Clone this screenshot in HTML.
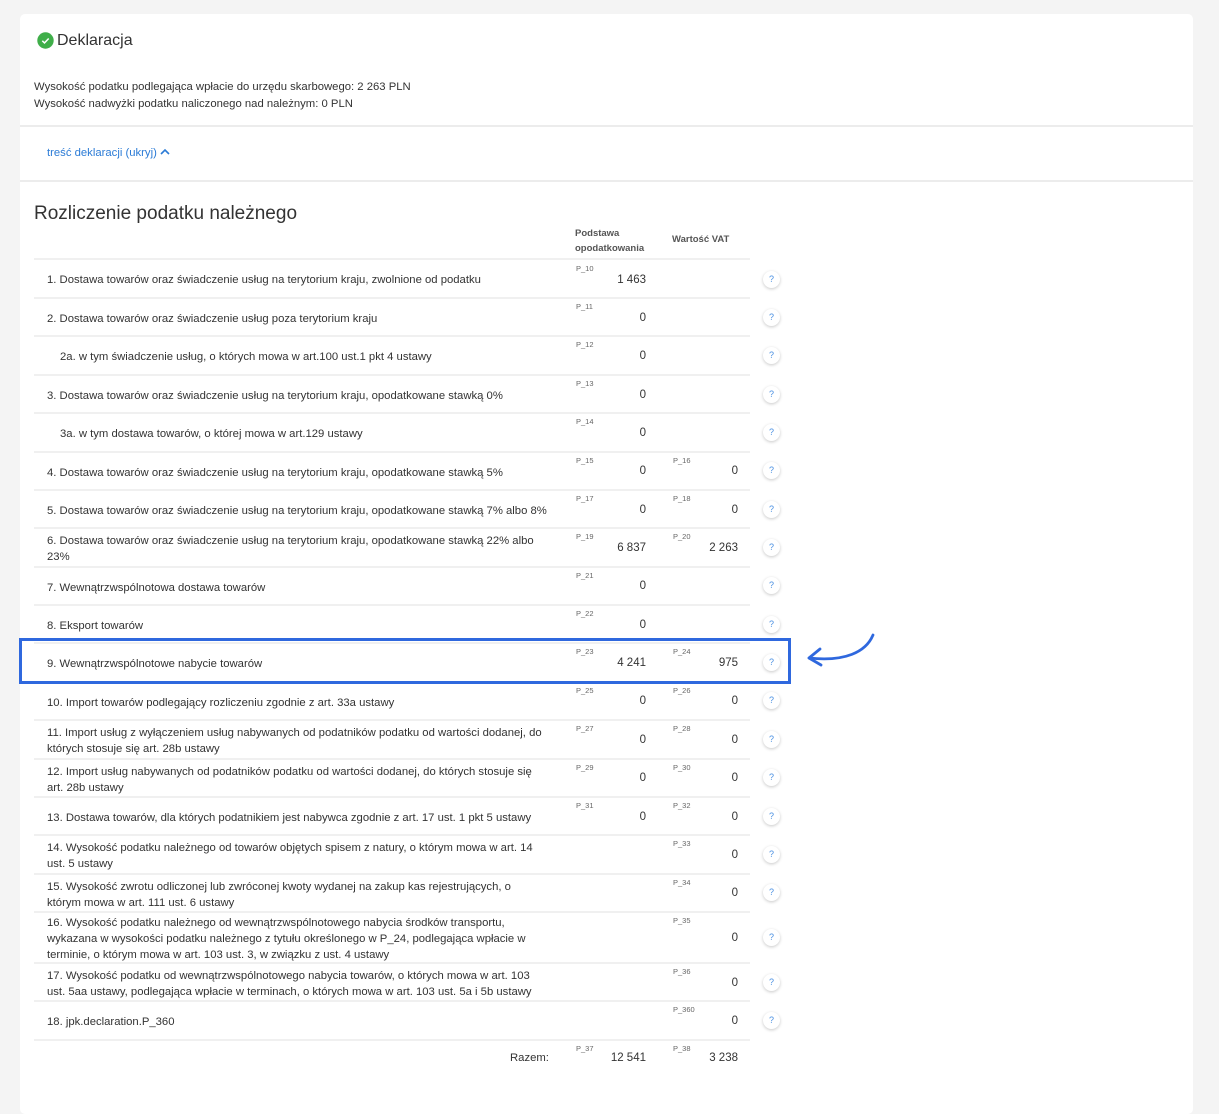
<!DOCTYPE html>
<html><head><meta charset="utf-8"><style>
*{margin:0;padding:0;box-sizing:border-box}
body{width:1219px;height:1080px;background:#f4f4f4;font-family:"Liberation Sans",Arial,sans-serif;color:#333;position:relative;overflow:hidden}
.card{position:absolute;left:20px;top:14px;width:1173px;height:1100px;background:#fff;border-radius:5px}
.abs{position:absolute}
.sep{position:absolute;left:20px;width:1173px;height:2px;background:#ececec}
.row{position:absolute;left:34px;width:716px;border-top:2px solid #f0f0f0}
.lbl{position:absolute;left:13px;width:520px;font-size:11.3px;line-height:16px;display:flex;align-items:center;color:#333;padding-top:1px}
.pc{position:absolute;font-size:7.5px;color:#666}
.v{position:absolute;font-size:11.5px;text-align:right;width:80px;margin-top:2px}
.q{position:absolute;left:763px;width:17px;height:17px;border-radius:50%;background:#fff;box-shadow:0 1px 3px rgba(0,0,0,.22);font-size:9px;color:#4a90e2;text-align:center;line-height:17px}
</style></head><body>
<div class="card"></div>
<svg class="abs" style="left:37px;top:32px" width="17" height="17" viewBox="0 0 17 17"><circle cx="8.5" cy="8.5" r="8.2" fill="#3fae49"/><path d="M5.3 8.8l2.2 2.1 4.2-4.4" stroke="#fff" stroke-width="1.5" fill="none"/></svg>
<div class="abs" style="left:57px;top:32px;font-size:16px;color:#333">Deklaracja</div>
<div class="abs" style="left:34px;top:79px;font-size:11.3px;line-height:17px">Wysokość podatku podlegająca wpłacie do urzędu skarbowego: 2 263 PLN<br>Wysokość nadwyżki podatku naliczonego nad należnym: 0 PLN</div>
<div class="sep" style="top:125px"></div>
<div class="abs" style="left:47px;top:147px;font-size:11.3px;color:#2b7bd6">treść deklaracji (ukryj) <svg width="10" height="8" viewBox="0 0 10 8" style="vertical-align:0"><path d="M1 6l4-4 4 4" stroke="#2b7bd6" stroke-width="1.6" fill="none"/></svg></div>
<div class="sep" style="top:180px"></div>
<div class="abs" style="left:34px;top:203px;font-size:19px;color:#333">Rozliczenie podatku należnego</div>
<div class="abs" style="left:575px;top:226px;font-size:9.5px;font-weight:bold;color:#555;line-height:15px">Podstawa<br>opodatkowania</div>
<div class="abs" style="left:672px;top:234px;font-size:9.5px;font-weight:bold;color:#555">Wartość VAT</div>

<div class="row" style="top:258px;height:39px"><div class="lbl" style="top:0;height:39px">1. Dostawa towarów oraz świadczenie usług na terytorium kraju, zwolnione od podatku</div></div>
<div class="pc" style="left:576px;top:264px">P_10</div><div class="v" style="left:566px;top:272px">1 463</div><div class="q" style="top:271px">?</div>

<div class="row" style="top:297px;height:38px"><div class="lbl" style="top:0;height:38px">2. Dostawa towarów oraz świadczenie usług poza terytorium kraju</div></div>
<div class="pc" style="left:576px;top:302px">P_11</div><div class="v" style="left:566px;top:310px">0</div><div class="q" style="top:309px">?</div>

<div class="row" style="top:335px;height:39px"><div class="lbl" style="top:0;height:39px;left:26px">2a. w tym świadczenie usług, o których mowa w art.100 ust.1 pkt 4 ustawy</div></div>
<div class="pc" style="left:576px;top:340px">P_12</div><div class="v" style="left:566px;top:348px">0</div><div class="q" style="top:347px">?</div>

<div class="row" style="top:374px;height:38px"><div class="lbl" style="top:0;height:38px">3. Dostawa towarów oraz świadczenie usług na terytorium kraju, opodatkowane stawką 0%</div></div>
<div class="pc" style="left:576px;top:379px">P_13</div><div class="v" style="left:566px;top:387px">0</div><div class="q" style="top:386px">?</div>

<div class="row" style="top:412px;height:39px"><div class="lbl" style="top:0;height:39px;left:26px">3a. w tym dostawa towarów, o której mowa w art.129 ustawy</div></div>
<div class="pc" style="left:576px;top:417px">P_14</div><div class="v" style="left:566px;top:425px">0</div><div class="q" style="top:424px">?</div>

<div class="row" style="top:451px;height:38px"><div class="lbl" style="top:0;height:38px">4. Dostawa towarów oraz świadczenie usług na terytorium kraju, opodatkowane stawką 5%</div></div>
<div class="pc" style="left:576px;top:456px">P_15</div><div class="v" style="left:566px;top:463px">0</div><div class="pc" style="left:673px;top:456px">P_16</div><div class="v" style="left:658px;top:463px">0</div><div class="q" style="top:462px">?</div>

<div class="row" style="top:489px;height:38px"><div class="lbl" style="top:0;height:38px">5. Dostawa towarów oraz świadczenie usług na terytorium kraju, opodatkowane stawką 7% albo 8%</div></div>
<div class="pc" style="left:576px;top:494px">P_17</div><div class="v" style="left:566px;top:502px">0</div><div class="pc" style="left:673px;top:494px">P_18</div><div class="v" style="left:658px;top:502px">0</div><div class="q" style="top:501px">?</div>

<div class="row" style="top:527px;height:39px"><div class="lbl" style="top:0;height:39px">6. Dostawa towarów oraz świadczenie usług na terytorium kraju, opodatkowane stawką 22% albo<br>23%</div></div>
<div class="pc" style="left:576px;top:532px">P_19</div><div class="v" style="left:566px;top:540px">6 837</div><div class="pc" style="left:673px;top:532px">P_20</div><div class="v" style="left:658px;top:540px">2 263</div><div class="q" style="top:539px">?</div>

<div class="row" style="top:566px;height:38px"><div class="lbl" style="top:0;height:38px">7. Wewnątrzwspólnotowa dostawa towarów</div></div>
<div class="pc" style="left:576px;top:571px">P_21</div><div class="v" style="left:566px;top:578px">0</div><div class="q" style="top:577px">?</div>

<div class="row" style="top:604px;height:38px"><div class="lbl" style="top:0;height:38px">8. Eksport towarów</div></div>
<div class="pc" style="left:576px;top:609px">P_22</div><div class="v" style="left:566px;top:617px">0</div><div class="q" style="top:616px">?</div>

<div class="row" style="top:642px;height:39px"><div class="lbl" style="top:0;height:39px">9. Wewnątrzwspólnotowe nabycie towarów</div></div>
<div class="pc" style="left:576px;top:647px">P_23</div><div class="v" style="left:566px;top:655px">4 241</div><div class="pc" style="left:673px;top:647px">P_24</div><div class="v" style="left:658px;top:655px">975</div><div class="q" style="top:654px">?</div>

<div class="row" style="top:681px;height:38px"><div class="lbl" style="top:0;height:38px">10. Import towarów podlegający rozliczeniu zgodnie z art. 33a ustawy</div></div>
<div class="pc" style="left:576px;top:686px">P_25</div><div class="v" style="left:566px;top:693px">0</div><div class="pc" style="left:673px;top:686px">P_26</div><div class="v" style="left:658px;top:693px">0</div><div class="q" style="top:692px">?</div>

<div class="row" style="top:719px;height:39px"><div class="lbl" style="top:0;height:39px">11. Import usług z wyłączeniem usług nabywanych od podatników podatku od wartości dodanej, do<br>których stosuje się art. 28b ustawy</div></div>
<div class="pc" style="left:576px;top:724px">P_27</div><div class="v" style="left:566px;top:732px">0</div><div class="pc" style="left:673px;top:724px">P_28</div><div class="v" style="left:658px;top:732px">0</div><div class="q" style="top:731px">?</div>

<div class="row" style="top:758px;height:38px"><div class="lbl" style="top:0;height:38px">12. Import usług nabywanych od podatników podatku od wartości dodanej, do których stosuje się<br>art. 28b ustawy</div></div>
<div class="pc" style="left:576px;top:763px">P_29</div><div class="v" style="left:566px;top:770px">0</div><div class="pc" style="left:673px;top:763px">P_30</div><div class="v" style="left:658px;top:770px">0</div><div class="q" style="top:769px">?</div>

<div class="row" style="top:796px;height:38px"><div class="lbl" style="top:0;height:38px">13. Dostawa towarów, dla których podatnikiem jest nabywca zgodnie z art. 17 ust. 1 pkt 5 ustawy</div></div>
<div class="pc" style="left:576px;top:801px">P_31</div><div class="v" style="left:566px;top:809px">0</div><div class="pc" style="left:673px;top:801px">P_32</div><div class="v" style="left:658px;top:809px">0</div><div class="q" style="top:808px">?</div>

<div class="row" style="top:834px;height:39px"><div class="lbl" style="top:0;height:39px">14. Wysokość podatku należnego od towarów objętych spisem z natury, o którym mowa w art. 14<br>ust. 5 ustawy</div></div>
<div class="pc" style="left:673px;top:839px">P_33</div><div class="v" style="left:658px;top:847px">0</div><div class="q" style="top:846px">?</div>

<div class="row" style="top:873px;height:38px"><div class="lbl" style="top:0;height:38px">15. Wysokość zwrotu odliczonej lub zwróconej kwoty wydanej na zakup kas rejestrujących, o<br>którym mowa w art. 111 ust. 6 ustawy</div></div>
<div class="pc" style="left:673px;top:878px">P_34</div><div class="v" style="left:658px;top:885px">0</div><div class="q" style="top:884px">?</div>

<div class="row" style="top:911px;height:51px"><div class="lbl" style="top:0;height:51px">16. Wysokość podatku należnego od wewnątrzwspólnotowego nabycia środków transportu,<br>wykazana w wysokości podatku należnego z tytułu określonego w P_24, podlegająca wpłacie w<br>terminie, o którym mowa w art. 103 ust. 3, w związku z ust. 4 ustawy</div></div>
<div class="pc" style="left:673px;top:916px">P_35</div><div class="v" style="left:658px;top:930px">0</div><div class="q" style="top:929px">?</div>

<div class="row" style="top:962px;height:38px"><div class="lbl" style="top:0;height:38px">17. Wysokość podatku od wewnątrzwspólnotowego nabycia towarów, o których mowa w art. 103<br>ust. 5aa ustawy, podlegająca wpłacie w terminach, o których mowa w art. 103 ust. 5a i 5b ustawy</div></div>
<div class="pc" style="left:673px;top:967px">P_36</div><div class="v" style="left:658px;top:975px">0</div><div class="q" style="top:974px">?</div>

<div class="row" style="top:1000px;height:39px"><div class="lbl" style="top:0;height:39px">18. jpk.declaration.P_360</div></div>
<div class="pc" style="left:673px;top:1005px">P_360</div><div class="v" style="left:658px;top:1013px">0</div><div class="q" style="top:1012px">?</div>

<div class="row" style="top:1039px;height:40px;"></div>
<div class="abs" style="left:510px;top:1052px;font-size:11.3px">Razem:</div>
<div class="pc" style="left:576px;top:1044px">P_37</div><div class="v" style="left:566px;top:1050px">12 541</div>
<div class="pc" style="left:673px;top:1044px">P_38</div><div class="v" style="left:658px;top:1050px">3 238</div>

<div class="abs" style="left:19px;top:638px;width:772px;height:46px;border:3px solid #2f68de"></div>
<svg class="abs" style="left:800px;top:628px" width="80" height="45" viewBox="800 628 80 45"><path d="M873 635 C866 652 845 662 809 658" stroke="#2f68de" stroke-width="2.8" fill="none" stroke-linecap="round"/><path d="M820 649 L809 658 L821 665" stroke="#2f68de" stroke-width="2.8" fill="none" stroke-linecap="round" stroke-linejoin="round"/></svg>
</body></html>
